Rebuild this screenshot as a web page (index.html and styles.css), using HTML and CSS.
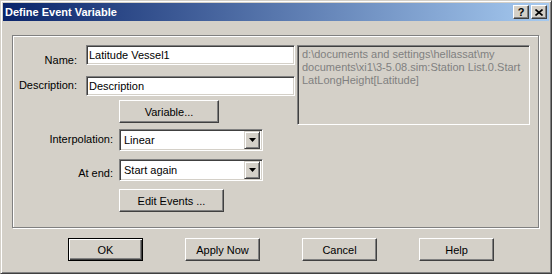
FILE: index.html
```html
<!DOCTYPE html>
<html lang="en">
<head>
  <meta charset="UTF-8">
  <title>Define Event Variable</title>
  <link rel="stylesheet" href="styles.css">
</head>
<body>
  <div class="window">
    <div class="titlebar">
      <span class="title">Define Event Variable</span>
      <div class="title-buttons">
        <div class="tbtn help">?</div>
        <div class="tbtn close">
          <svg width="8" height="7" viewBox="0 0 8 7"><path d="M0.5 0.5L7.5 6.5M7.5 0.5L0.5 6.5" stroke="#000" stroke-width="1.6" fill="none"/></svg>
        </div>
      </div>
    </div>

    <div class="content">
      <div class="group">
        <div class="top">
          <div class="fields">
            <div class="row">
              <label class="lbl lbl-name" for="name">Name:</label>
              <input class="edit" type="text" id="name" value="Latitude Vessel1">
            </div>
            <div class="row row-desc">
              <label class="lbl lbl-desc" for="desc">Description:</label>
              <input class="edit" type="text" id="desc" value="Description">
            </div>
            <button class="btn btn-variable">Variable...</button>
          </div>
          <div class="path-box">d:\documents and settings\hellassat\my documents\xi1\3-5.08.sim:Station List.0.Start LatLongHeight[Latitude]</div>
        </div>

        <div class="row row-interp">
          <span class="lbl lbl-wide lbl-interp">Interpolation:</span>
          <div class="combo">
            <span class="combo-text">Linear</span>
            <span class="combo-btn"><svg width="7" height="4" viewBox="0 0 7 4"><path d="M0 0h7L3.5 4z" fill="#000"/></svg></span>
          </div>
        </div>
        <div class="row row-end">
          <span class="lbl lbl-wide lbl-end">At end:</span>
          <div class="combo">
            <span class="combo-text">Start again</span>
            <span class="combo-btn"><svg width="7" height="4" viewBox="0 0 7 4"><path d="M0 0h7L3.5 4z" fill="#000"/></svg></span>
          </div>
        </div>
        <button class="btn btn-events">Edit Events ...</button>
      </div>

      <div class="actions">
        <button class="btn btn-action btn-default">OK</button>
        <button class="btn btn-action">Apply Now</button>
        <button class="btn btn-action">Cancel</button>
        <button class="btn btn-action">Help</button>
      </div>
    </div>
  </div>
</body>
</html>
```

FILE: styles.css
```css
* {
  box-sizing: border-box;
}

body {
  margin: 0;
  padding: 0;
  font-family: 'Liberation Sans', Arial, sans-serif;
  font-size: 11px;
  line-height: 13px;
  color: #000;
  background: #d4d0c8;
}

.window {
  width: 552px;
  height: 274px;
  padding: 2px;
  background: #d4d0c8;
  border: 1px solid;
  border-color: #d4d0c8 #404040 #404040 #d4d0c8;
  box-shadow: inset 1px 1px #fff, inset -1px -1px #808080;
}

.titlebar {
  display: flex;
  align-items: center;
  height: 18px;
  padding-left: 2px;
  background: linear-gradient(to right, #0a246a, #a6caf0);
  color: #fff;
}

.title {
  font-weight: bold;
  line-height: 18px;
}

.title-buttons {
  display: flex;
  gap: 2px;
  margin-left: auto;
  margin-right: 2px;
}

.tbtn {
  width: 16px;
  height: 14px;
  display: flex;
  align-items: center;
  justify-content: center;
  background: #d4d0c8;
  color: #000;
  font-weight: bold;
  font-size: 11px;
  border: 1px solid;
  border-color: #fff #404040 #404040 #fff;
  box-shadow: inset -1px -1px #808080;
}

.content {
  padding: 14px 0 0 9px;
}

.group {
  width: 527px;
  height: 193px;
  padding-top: 9px;
  border: 1px solid #808080;
  box-shadow: inset 1px 1px #fff, 1px 1px #fff;
}

.top {
  display: flex;
  align-items: flex-start;
}

.fields {
  width: 282px;
}

.row {
  display: flex;
  align-items: flex-start;
}

.lbl {
  width: 64px;
  text-align: right;
  white-space: nowrap;
}

.lbl-name { padding-top: 9px; }
.lbl-desc { padding-top: 3px; }

.lbl-wide {
  width: 100px;
}

.lbl-interp { padding-top: 4px; }
.lbl-end { padding-top: 8px; }

.edit {
  width: 209px;
  height: 20px;
  margin: 0 0 0 9px;
  padding: 0 2px 1px;
  font-family: inherit;
  font-size: 11px;
  color: #000;
  background: #fff;
  border: 1px solid;
  border-color: #808080 #fff #fff #808080;
  box-shadow: inset 1px 1px #404040, inset -1px -1px #d4d0c8;
  outline: none;
}

.row-desc {
  margin-top: 9px;
}

.btn {
  display: block;
  height: 23px;
  padding: 0;
  font-family: inherit;
  font-size: 11px;
  color: #000;
  background: #d4d0c8;
  border: 1px solid;
  border-color: #fff #404040 #404040 #fff;
  box-shadow: inset -1px -1px #808080;
  cursor: pointer;
}

.btn-variable {
  width: 100px;
  margin: 4px 0 0 106px;
}

.path-box {
  width: 233px;
  height: 80px;
  margin-left: 2px;
  padding: 2px 4px;
  color: #808080;
  border: 1px solid;
  border-color: #808080 #fff #fff #808080;
  box-shadow: inset 1px 1px #404040, inset -1px -1px #d4d0c8;
}

.row-interp {
  margin-top: 4px;
}

.row-end {
  margin-top: 8px;
}

.combo {
  display: flex;
  align-items: center;
  width: 144px;
  height: 22px;
  margin-left: 6px;
  padding: 2px;
  background: #fff;
  border: 1px solid;
  border-color: #808080 #fff #fff #808080;
  box-shadow: inset 1px 1px #404040, inset -1px -1px #d4d0c8;
}

.combo-text {
  flex: 1;
  padding-left: 2px;
}

.combo-btn {
  display: flex;
  align-items: center;
  justify-content: center;
  width: 16px;
  height: 18px;
  background: #d4d0c8;
  border: 1px solid;
  border-color: #d4d0c8 #404040 #404040 #d4d0c8;
  box-shadow: inset 1px 1px #fff, inset -1px -1px #808080;
}

.btn-events {
  width: 105px;
  margin: 8px 0 0 106px;
}

.actions {
  display: flex;
  gap: 42px;
  margin-top: 10px;
  padding-left: 56px;
}

.btn-action {
  width: 75px;
}

.btn-default {
  border: 1px solid #000;
  box-shadow: inset 1px 1px #fff, inset -1px -1px #404040, inset -2px -2px #808080;
}
```
